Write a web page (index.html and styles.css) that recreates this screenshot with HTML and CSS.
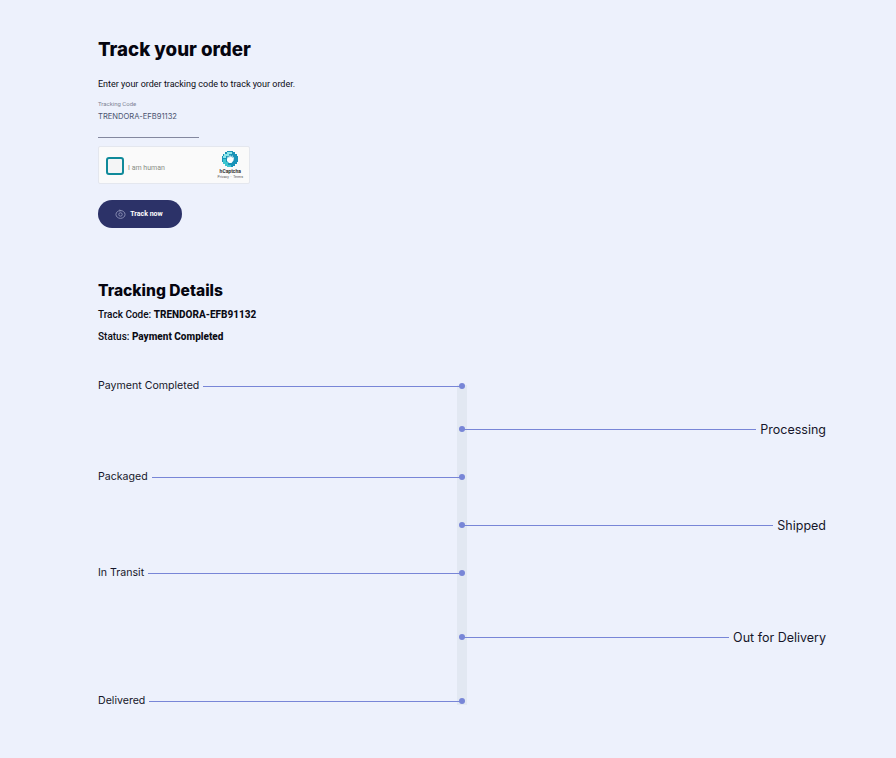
FILE: index.html
```html
<!DOCTYPE html>
<html lang="en">
<head>
    <meta charset="UTF-8">
    <title>Track your order</title>
    <link rel="stylesheet" href="styles.css">
</head>
<body>
<div class="main">
    <h1 class="page-title">Track your order</h1>
    <p class="intro">Enter your order tracking code to track your order.</p>

    <div class="field">
        <label class="field-label">Tracking Code</label>
        <div class="field-value">TRENDORA-EFB91132</div>
    </div>

    <div class="captcha">
        <div class="captcha-check"></div>
        <span class="captcha-text">I am human</span>
        <div class="captcha-brand">
            <svg class="captcha-logo" viewBox="0 0 16 16" width="16" height="16">
                <path fill="#1a93b8" d="M5 0h6v1h2v2h2v2h1v6h-1v2h-2v2h-2v1H5v-1H3v-2H1v-2H0V5h1V3h2V1h2z"/>
                <path fill="#3cc6d0" d="M1 8h3v3h2v3h3v2H5v-1H3v-2H1z"/>
                <path fill="#8ce6ea" d="M5 1h5v2H7v2H4v2H1V5h1V3h3z"/>
                <path fill="#fff" d="M5 8l1-3 1 2 1-3.500 1 3 1.500-2.500 0 3 1.500-1-.5 3.500-2 2.500H7L5 10z"/>
            </svg>
            <span class="captcha-name">hCaptcha</span>
            <span class="captcha-links">Privacy &nbsp;·&nbsp; Terms</span>
        </div>
    </div>

    <button class="track-btn">
        <svg class="track-icon" viewBox="0 0 12 11" width="11" height="10">
            <ellipse cx="6" cy="6" rx="5" ry="4.300" fill="none" stroke="#8f94b8" stroke-width="1"/>
            <circle cx="6" cy="6" r="1.900" fill="none" stroke="#8f94b8" stroke-width="1"/>
            <path d="M4.500 1l2 .700-1.500 1" fill="none" stroke="#8f94b8" stroke-width=".8"/>
        </svg>
        Track now
    </button>

    <h2 class="details-title">Tracking Details</h2>
    <p class="details-line">Track Code: <b>TRENDORA-EFB91132</b></p>
    <p class="details-line">Status: <b>Payment Completed</b></p>

    <div class="timeline">
        <div class="step step-left"><span class="step-name">Payment Completed</span><span class="step-line"></span></div>
        <div class="step step-right gap-43"><span class="step-line"></span><span class="step-name big">Processing</span></div>
        <div class="step step-left gap-48"><span class="step-name">Packaged</span><span class="step-line"></span></div>
        <div class="step step-right gap-48"><span class="step-line"></span><span class="step-name big">Shipped</span></div>
        <div class="step step-left gap-48"><span class="step-name">In Transit</span><span class="step-line"></span></div>
        <div class="step step-right gap-64"><span class="step-line"></span><span class="step-name big">Out for Delivery</span></div>
        <div class="step step-left gap-64"><span class="step-name">Delivered</span><span class="step-line"></span></div>
    </div>
</div>
</body>
</html>
```

FILE: styles.css
```css
html, body {
    margin: 0;
    padding: 0;
    height: 100%;
    overflow: hidden;
    background-color: #edf1fc;
}

.main {
    padding: 38px 70px 0 98px;
    font-family: Roboto, "Liberation Sans", sans-serif;
    color: #0b0b14;
}

.page-title {
    margin: 0;
    font-family: Inter, "Liberation Sans", sans-serif;
    font-size: 18.700px;
    line-height: 24px;
    font-weight: 800;
    color: #05050f;
}

.intro {
    margin: 16px 0 0;
    font-size: 9px;
    line-height: 12px;
}

.field {
    width: 101px;
    height: 37px;
    margin-top: 10px;
    border-bottom: 1px solid #84889f;
}

.field-label {
    display: block;
    font-size: 6px;
    line-height: 7px;
    color: #7f8596;
}

.field-value {
    margin-top: 5px;
    font-family: Inter, "Liberation Sans", sans-serif;
    font-size: 7.600px;
    line-height: 10px;
    color: #4b5470;
    white-space: nowrap;
}

.captcha {
    display: flex;
    align-items: center;
    width: 152px;
    height: 38px;
    margin-top: 8px;
    box-sizing: border-box;
    padding-left: 7px;
    background-color: #fafafa;
    border: 1px solid #e4e7ee;
    border-radius: 2px;
}

.captcha-check {
    width: 18px;
    height: 18px;
    margin-top: 1px;
    box-sizing: border-box;
    border: 2px solid #0f8a9a;
    border-radius: 3px;
    background-color: #f4f5f6;
}

.captcha-text {
    margin: 5px 0 0 4px;
    font-size: 7px;
    color: #8a8f86;
}

.captcha-brand {
    display: flex;
    flex-direction: column;
    align-items: center;
    margin-left: auto;
    padding-right: 6px;
}

.captcha-logo {
    display: block;
}

.captcha-name {
    font-size: 5px;
    line-height: 7px;
    margin-top: 1px;
    font-weight: 700;
    color: #333;
}

.captcha-links {
    font-size: 3.500px;
    line-height: 4px;
    color: #555;
}

.track-btn {
    display: flex;
    align-items: center;
    justify-content: center;
    gap: 4px;
    width: 84px;
    height: 28px;
    margin-top: 16px;
    padding: 0 2px 0 0;
    border: none;
    border-radius: 14px;
    background-color: #2c3268;
    color: #fff;
    font-family: Roboto, sans-serif;
    font-size: 7px;
    font-weight: 700;
    cursor: pointer;
}

.details-title {
    margin: 53px 0 0;
    font-family: Inter, "Liberation Sans", sans-serif;
    font-size: 15.600px;
    line-height: 20px;
    font-weight: 800;
    color: #05050f;
}

.details-line {
    margin: 8px 0 0;
    font-size: 10px;
    line-height: 12px;
    font-weight: 500;
}

.details-line + .details-line {
    margin-top: 10px;
}

.details-line b {
    font-weight: 800;
}

.timeline {
    position: relative;
    margin-top: 37px;
}

/* grey rail behind the dots */
.timeline::before {
    content: "";
    position: absolute;
    left: 359px;
    top: 5px;
    bottom: 2px;
    width: 10px;
    background-color: #e2e8f2;
}

.step {
    position: relative;
    display: flex;
    align-items: center;
    gap: 4px;
    width: 364px;
    height: 12px;
    font-family: Inter, "Liberation Sans", sans-serif;
}

.step-right {
    margin-left: 364px;
}

.gap-43 { margin-top: 31px; }
.gap-48 { margin-top: 36px; }
.gap-64 { margin-top: 52px; }

.step::after {
    content: "";
    position: absolute;
    top: 3px;
    width: 6px;
    height: 6px;
    border-radius: 50%;
    background-color: #7886d7;
}

.step-left::after { right: -3px; }
.step-right::after { left: -3px; }

.step-line {
    flex: 1;
    height: 1px;
    background-color: #7886d7;
}

.step-name {
    font-size: 10.600px;
    line-height: 12px;
    color: #16162a;
    white-space: nowrap;
}

.step-name.big {
    padding-top: 2px;
    font-size: 12.500px;
}
```
